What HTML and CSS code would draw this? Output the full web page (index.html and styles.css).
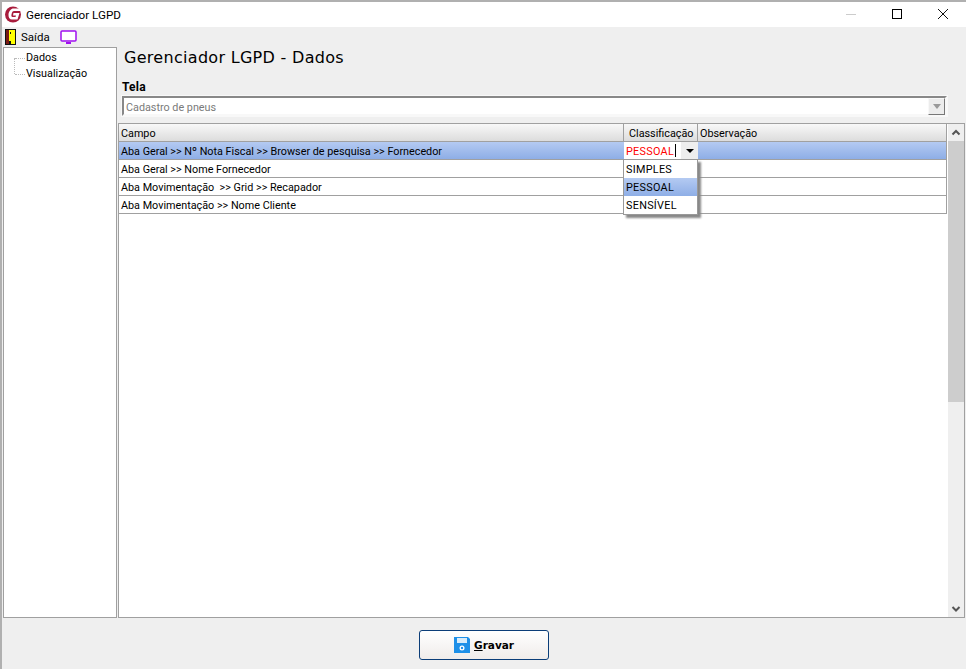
FILE: index.html
```html
<!DOCTYPE html>
<html lang="pt">
<head>
<meta charset="utf-8">
<title>Gerenciador LGPD</title>
<link rel="stylesheet" href="styles.css">
</head>
<body>
<div class="window">
  <header class="titlebar">
    <svg class="logo" width="17" height="17" viewBox="0 0 17 17"><circle cx="8" cy="8.500" r="8" fill="#a81c3c"/><path d="M17 2.500H8.500C6 2.500 4 5 3.500 8C3.200 11.500 4.500 13.500 7 13.500H12.500L14.500 7H8.500L8 9.500H11L10.500 11H7.500C6.500 11 6.200 10 6.500 8.500C6.900 6 7.800 5 9 5H15.500Z" fill="#fff"/></svg>
    <span class="title">Gerenciador LGPD</span>
    <div class="winctl">
      <svg width="46" height="25" viewBox="0 0 46 25"><path d="M18 12.500H28" stroke="#ccc"/></svg>
      <svg width="46" height="25" viewBox="0 0 46 25"><rect x="18.500" y="7.500" width="9" height="9" fill="none" stroke="#000"/></svg>
      <svg width="46" height="25" viewBox="0 0 46 25"><path d="M18 7L28 17M28 7L18 17" stroke="#111" fill="none"/></svg>
    </div>
  </header>
  <nav class="toolbar">
    <svg width="11" height="16" viewBox="0 0 11 16"><rect width="11" height="16" fill="#111"/><rect x="3" y="1" width="7" height="14" fill="#ff0"/><rect x="1" y="1" width="3" height="14" fill="#7a1a14"/><rect x="5" y="3" width="1" height="2" fill="#111"/><rect x="4" y="12" width="2" height="3" fill="#111"/></svg>
    <span class="exit">Saída</span>
    <svg class="monitor" width="17" height="15" viewBox="0 0 17 15"><rect x="1" y="1" width="15" height="10" rx="1" fill="#fff" stroke="#a010f0" stroke-width="1.500"/><rect x="6" y="12" width="5" height="2" fill="#a010f0"/></svg>
  </nav>
  <div class="body">
    <aside class="tree">
      <div class="tree-guide"></div>
      <div class="tree-item">Dados</div>
      <div class="tree-item">Visualização</div>
    </aside>
    <main class="content">
      <h1>Gerenciador LGPD - Dados</h1>
      <label class="field-label">Tela</label>
      <div class="select">
        <span>Cadastro de pneus</span>
        <span class="select-btn"><i></i></span>
      </div>
      <div class="grid">
        <div class="grid-main">
          <div class="row head">
            <div class="c1">Campo</div><div class="c2">Classificação</div><div class="c3">Observação</div>
          </div>
          <div class="row sel">
            <div class="c1">Aba Geral &gt;&gt; Nº Nota Fiscal &gt;&gt; Browser de pesquisa &gt;&gt; Fornecedor</div>
            <div class="c2 editor"><span class="val">PESSOAL</span><span class="caret"></span><span class="drop"><i></i></span></div>
            <div class="c3"></div>
          </div>
          <div class="row"><div class="c1">Aba Geral &gt;&gt; Nome Fornecedor</div><div class="c2"></div><div class="c3"></div></div>
          <div class="row"><div class="c1">Aba Movimentação &nbsp;&gt;&gt; Grid &gt;&gt; Recapador</div><div class="c2"></div><div class="c3"></div></div>
          <div class="row"><div class="c1">Aba Movimentação &gt;&gt; Nome Cliente</div><div class="c2"></div><div class="c3"></div></div>
          <ul class="menu">
            <li>SIMPLES</li>
            <li class="on">PESSOAL</li>
            <li>SENSÍVEL</li>
          </ul>
        </div>
        <div class="scroll">
          <svg width="16" height="17" viewBox="0 0 16 17"><path d="M4.500 10.500L8 7L11.500 10.500" fill="none" stroke="#555" stroke-width="2"/></svg>
          <div class="thumb"></div>
          <div class="track"></div>
          <svg width="16" height="17" viewBox="0 0 16 17"><path d="M4.500 7L8 10.500L11.500 7" fill="none" stroke="#555" stroke-width="2"/></svg>
        </div>
      </div>
    </main>
  </div>
  <footer class="footer">
    <button class="save" type="button">
      <svg width="16" height="16" viewBox="0 0 16 16"><path d="M0 0H14L16 2V16H0Z" fill="#1e90e8"/><rect x="3" y="1" width="10" height="5" fill="#d8ecfa"/><circle cx="8" cy="11" r="2.500" fill="#fff"/><circle cx="8" cy="11" r="1.200" fill="#1e90e8"/></svg>
      <span><u>G</u>ravar</span>
    </button>
  </footer>
</div>
</body>
</html>
```
FILE: styles.css
```css
* { box-sizing: border-box; }
html, body { margin: 0; height: 100%; overflow: hidden; }
body {
  font-family: Roboto, "Liberation Sans", Arial, sans-serif;
  font-size: 10.800px;
  color: #000;
  background: #fff;
}
.window {
  width: 966px;
  height: 669px;
  display: flex;
  flex-direction: column;
  background: #efefef;
  border-top: 2px solid #b0b0b0;
  border-left: 2px solid #b0b0b0;
}
.titlebar {
  height: 25px;
  flex: none;
  background: #fff;
  display: flex;
  align-items: center;
  padding-left: 3px;
}
.logo { flex: none; }
.title { margin-left: 4px; font-size: 11.700px; }
.winctl { margin-left: auto; display: flex; }
.winctl svg { display: block; }
.toolbar {
  height: 20px;
  flex: none;
  display: flex;
  align-items: center;
  padding-left: 3px;
}
.exit { margin-left: 5px; font-size: 11.500px; }
.monitor { margin-left: 10px; }
.body { flex: none; height: 571px; display: flex; padding-left: 1px; }
.tree {
  position: relative;
  width: 114px;
  flex: none;
  height: 571px;
  background: #fff;
  border: 1px solid #a0a0a0;
  padding: 2px 0 0 22px;
}
.tree-item { height: 16px; line-height: 16px; position: relative; }
.tree-item::before {
  content: "";
  position: absolute;
  left: -11px;
  top: 8px;
  width: 10px;
  border-top: 1px dotted #bbb;
}
.tree-guide {
  position: absolute;
  left: 10px;
  top: 10px;
  height: 16px;
  border-left: 1px dotted #bbb;
}
.content { width: 848px; flex: none; padding: 0 0 0 1px; display: flex; flex-direction: column; }
h1 {
  margin: 0;
  padding: 1px 0 0 6px;
  height: 33px;
  font: 400 16px/20px "DejaVu Sans", sans-serif;
  letter-spacing: 0.3px;
}
.field-label { font-weight: 700; font-size: 12px; padding-left: 4px; height: 14px; line-height: 14px; letter-spacing: 0.2px; }
.select {
  margin: 2px 18px 0 4px;
  height: 20px;
  background: #fff;
  border: 2px solid;
  border-color: #888 #f8f8f8 #f8f8f8 #888;
  outline: 1px solid #f8f8f8;
  display: flex;
  align-items: center;
  padding-left: 2px;
  color: #7a7a7a;
}
.select > span:first-child { padding-top: 2px; }
.select-btn {
  margin-left: auto;
  width: 17px;
  height: 17px;
  background: #ececec;
  border: 1px solid;
  border-color: #f8f8f8 #777 #777 #f8f8f8;
  display: flex;
  align-items: center;
  justify-content: center;
}
.select-btn i { border: 4px solid transparent; border-top: 5px solid #999; border-bottom: 0; }
.grid {
  margin-top: 7px;
  height: 495px;
  background: #fff;
  border: 1px solid #a0a0a0;
  display: flex;
  justify-content: space-between;
}
.grid-main { flex: none; width: 828px; position: relative; }
.row { display: flex; height: 18px; border-bottom: 1px solid #a0a0a0; border-right: 1px solid #a0a0a0; line-height: 19px; width: 828px; }
.row > div { padding-left: 2px; white-space: nowrap; overflow: hidden; }
.c1 { width: 505px; flex: none; }
.c2 { width: 74px; flex: none; }
.c3 { flex: 1; }
.head { background: linear-gradient(#f8f8f8, #dcdcdc); height: 18px; }
.head > div { border-right: 1px solid #a0a0a0; }
.head .c2 { padding-left: 5px; }
.head .c3 { border-right: 0; }
.sel { background: linear-gradient(#b4caf2, #8eaee6); }
.editor { background: #fff; display: flex; align-items: center; color: #f00; position: relative; overflow: visible; }
.val { letter-spacing: 0.3px; padding-top: 1px; }
.caret { width: 1px; height: 13px; background: #000; margin-left: 1px; }
.drop {
  position: absolute;
  right: 0;
  top: 0;
  width: 17px;
  height: 17px;
  background: #eee;
  display: flex;
  align-items: center;
  justify-content: center;
}
.drop i { border: 4px solid transparent; border-top: 4px solid #000; border-bottom: 0; }
.menu {
  position: absolute;
  left: 504px;
  top: 35px;
  width: 75px;
  margin: 0;
  padding: 0;
  list-style: none;
  background: #fff;
  border: 1px solid #999;
  box-shadow: 3px 3px 2px #888;
  letter-spacing: 0.3px;
}
.menu li { height: 18px; line-height: 19px; padding-left: 2px; }
.menu .on { background: linear-gradient(#b4caf2, #8eaee6); }
.scroll { width: 16px; flex: none; display: flex; flex-direction: column; background: #efefef; }
.scroll svg { display: block; flex: none; }
.thumb { height: 261px; background: #cdcdcd; flex: none; }
.track { flex: 1; }
.footer { flex: 1; display: flex; justify-content: center; align-items: flex-start; padding: 12px 0 0 0; }
.save {
  width: 130px;
  height: 30px;
  border: 1px solid #0b3d78;
  border-radius: 3px;
  background: linear-gradient(#fff, #f0ecea);
  display: flex;
  align-items: center;
  justify-content: center;
  gap: 4px;
  font: 700 10.500px "DejaVu Sans", sans-serif;
  padding: 0;
  color: #000;
}
```
